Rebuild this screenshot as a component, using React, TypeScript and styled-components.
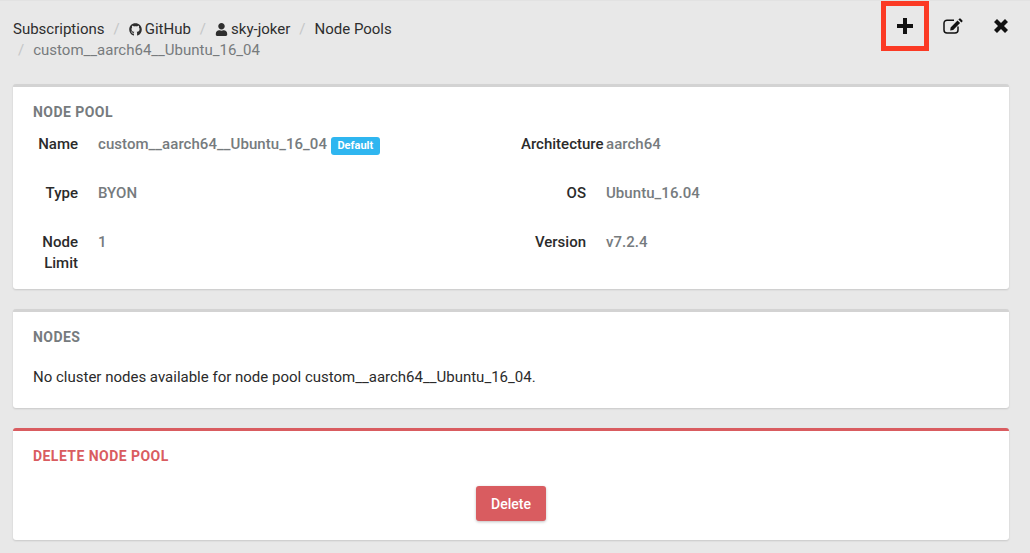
import React from "react";
import styled, { createGlobalStyle } from "styled-components";
import { FaGithub, FaUser } from "react-icons/fa";

const Global = createGlobalStyle`
  html, body { margin: 0; padding: 0; background: #e8e8e8; }
  body { font-family: Roboto, "Liberation Sans", sans-serif; color: #2b2b2b; overflow: hidden; }
  * { box-sizing: border-box; }
`;

const Page = styled.div`
  width: 1030px;
  height: 553px;
  padding: 0 21px 0 13px;
  border-top: 1px solid #e2e2e2;
  overflow: hidden;
`;

const Header = styled.header`
  display: flex;
  justify-content: space-between;
  height: 83px;
`;

const Breadcrumb = styled.nav`
  width: 480px;
  padding-top: 18px;
  font-size: 15px;
  line-height: 21px;
`;

const Crumb = styled.span<{ $muted?: boolean }>`
  color: ${(p) => (p.$muted ? "#777b7d" : "#2e2e2e")};
  white-space: nowrap;
  svg { vertical-align: -2px; margin-right: 3px; font-size: 13px; }
`;

const Slash = styled.span<{ $lead?: boolean }>`
  color: #c4c6c7;
  padding: 0 9px 0 ${(p) => (p.$lead ? "5px" : "9px")};
`;

const Actions = styled.div`
  display: flex;
  align-items: flex-start;
  margin-right: -16px;
`;

const IconButton = styled.button<{ $flagged?: boolean }>`
  display: flex;
  align-items: center;
  justify-content: center;
  width: 48px;
  height: 50px;
  padding: 0;
  background: none;
  color: #111;
  border: ${(p) => (p.$flagged ? "5px solid #fb3a24" : "none")};
`;

const Glyph = styled.svg`
  display: block;
  fill: currentColor;
`;

const Card = styled.section<{ $danger?: boolean; $height: number }>`
  height: ${(p) => p.$height}px;
  width: 996px;
  margin-bottom: 20px;
  padding: 17px 20px 0;
  background: #fff;
  border-top: 3px solid ${(p) => (p.$danger ? "#d95c60" : "#d3d3d3")};
  border-radius: 3px;
  box-shadow: 0 1px 2px rgba(0, 0, 0, 0.14);
`;

const Title = styled.h2<{ $danger?: boolean }>`
  margin: 0;
  font-size: 14px;
  line-height: 16px;
  font-weight: 700;
  letter-spacing: 0.45px;
  color: ${(p) => (p.$danger ? "#d95c60" : "#767b7e")};
`;

const Details = styled.dl`
  display: grid;
  grid-template-columns: 508px 1fr;
  grid-auto-rows: 49px;
  margin: 14px 0 0 -20px;
`;

const Pair = styled.div`
  display: grid;
  grid-template-columns: 65px 1fr;
  column-gap: 20px;
  font-size: 15px;
  line-height: 21px;
  font-weight: 500;
`;

const Label = styled.dt`
  text-align: right;
  color: #2b2b2b;
`;

const Value = styled.dd`
  margin: 0;
  color: #767b7e;
  letter-spacing: 0.05px;
`;

const Badge = styled.span`
  display: inline-block;
  margin-left: 4px;
  padding: 0 6.5px;
  height: 18px;
  line-height: 18px;
  border-radius: 3px;
  background: #2fb6f0;
  color: #fff;
  font-size: 11px;
  font-weight: 700;
  letter-spacing: 0;
  vertical-align: 0;
`;

const Message = styled.p`
  margin: 22px 0 0;
  font-size: 15px;
  line-height: 21px;
  color: #2b2b2b;
`;

const ButtonRow = styled.div`
  display: flex;
  justify-content: center;
  margin-top: 22px;
`;

const DangerButton = styled.button`
  width: 70px;
  height: 35px;
  padding: 0;
  border: none;
  border-radius: 3px;
  background: #d95c60;
  color: #fff;
  font: 500 14px Roboto, sans-serif;
  box-shadow: 0 1px 3px rgba(0, 0, 0, 0.25);
`;

const rows: [string, React.ReactNode][] = [
  ["Name", <>custom__aarch64__Ubuntu_16_04<Badge>Default</Badge></>],
  ["Architecture", "aarch64"],
  ["Type", "BYON"],
  ["OS", "Ubuntu_16.04"],
  ["Node Limit", "1"],
  ["Version", "v7.2.4"],
];

export default function App() {
  return (
    <Page>
      <Global />
      <Header>
        <Breadcrumb>
          <Crumb>Subscriptions</Crumb>
          <Slash>/</Slash>
          <Crumb><FaGithub />GitHub</Crumb>
          <Slash>/</Slash>
          <Crumb><FaUser />sky-joker</Crumb>
          <Slash>/</Slash>
          <Crumb>Node Pools</Crumb>
          <br />
          <Slash $lead>/</Slash>
          <Crumb $muted>custom__aarch64__Ubuntu_16_04</Crumb>
        </Breadcrumb>
        <Actions>
          <IconButton $flagged aria-label="Add">
            <Glyph width="16" height="16" viewBox="0 0 16 16"><path d="M6 0h4v6h6v4h-6v6H6v-6H0V6h6z" /></Glyph>
          </IconButton>
          <IconButton aria-label="Edit">
            <Glyph width="20" height="16" viewBox="0 0 20 16">
              <path d="M11 2.2H4a3 3 0 0 0-3 3V12a3 3 0 0 0 3 3h8a3 3 0 0 0 3-3V8.5" fill="none" stroke="currentColor" strokeWidth="1.5" />
              <path d="M7.6 9.4 14.5 2.5l2.6 2.6-6.9 6.9-3 .4zM15.4 1.6l1-1c.3-.3.8-.3 1.1 0l1.9 1.9c.3.3.3.8 0 1.1l-1 1z" />
            </Glyph>
          </IconButton>
          <IconButton aria-label="Close">
            <Glyph width="14" height="14" viewBox="0 0 14 14"><path d="M3 0l4 4 4-4 3 3-4 4 4 4-3 3-4-4-4 4-3-3 4-4-4-4z" /></Glyph>
          </IconButton>
        </Actions>
      </Header>
      <Card $height={205}>
        <Title>NODE POOL</Title>
        <Details>
          {rows.map(([k, v]) => (
            <Pair key={k}>
              <Label>{k}</Label>
              <Value>{v}</Value>
            </Pair>
          ))}
        </Details>
      </Card>
      <Card $height={99}>
        <Title>NODES</Title>
        <Message>No cluster nodes available for node pool custom__aarch64__Ubuntu_16_04.</Message>
      </Card>
      <Card $danger $height={112}>
        <Title $danger>DELETE NODE POOL</Title>
        <ButtonRow>
          <DangerButton>Delete</DangerButton>
        </ButtonRow>
      </Card>
    </Page>
  );
}
